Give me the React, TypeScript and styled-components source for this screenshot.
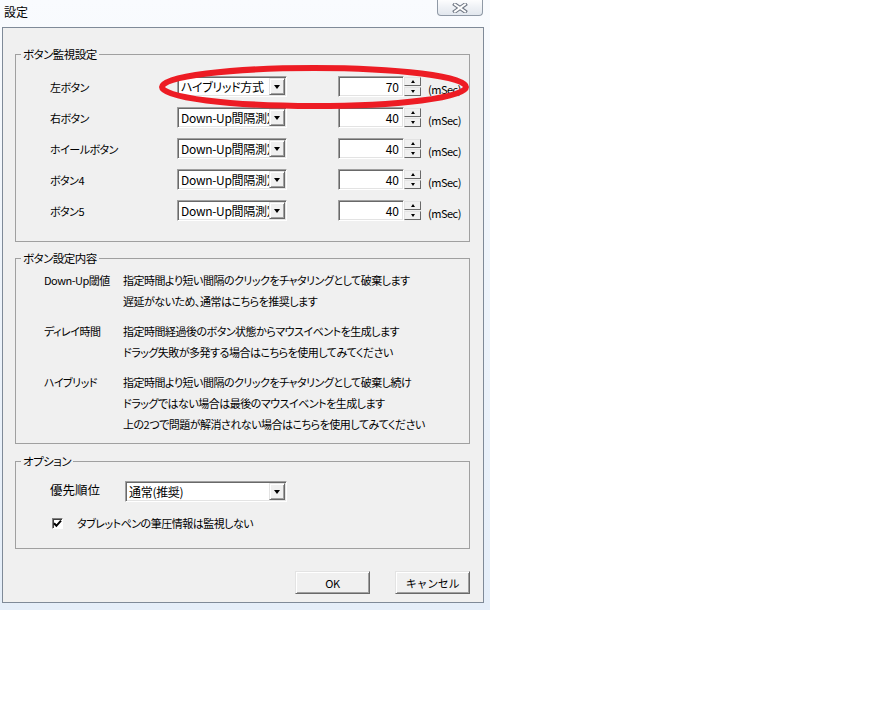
import React from "react";
import styled, { createGlobalStyle } from "styled-components";

const GlobalStyle = createGlobalStyle`
  html, body {
    margin: 0;
    padding: 0;
    background: #fff;
  }
  body {
    font-family: "Noto Sans CJK JP", "Noto Sans", sans-serif;
    font-size: 11px;
    letter-spacing: -0.5px;
    color: #000;
    font-feature-settings: "palt";
  }
  * {
    box-sizing: border-box;
  }
`;

const buttonRows = [
    { label: "左ボタン", mode: "ハイブリッド方式", value: "70" },
    { label: "右ボタン", mode: "Down-Up間隔測定", value: "40" },
    { label: "ホイールボタン", mode: "Down-Up間隔測定", value: "40" },
    { label: "ボタン4", mode: "Down-Up間隔測定", value: "40" },
    { label: "ボタン5", mode: "Down-Up間隔測定", value: "40" },
];

const descriptions = [
    {
        label: "Down-Up閾値",
        lines: [
            "指定時間より短い間隔のクリックをチャタリングとして破棄します",
            "遅延がないため、通常はこちらを推奨します",
        ],
    },
    {
        label: "ディレイ時間",
        lines: [
            "指定時間経過後のボタン状態からマウスイベントを生成します",
            "ドラッグ失敗が多発する場合はこちらを使用してみてください",
        ],
    },
    {
        label: "ハイブリッド",
        lines: [
            "指定時間より短い間隔のクリックをチャタリングとして破棄し続け",
            "ドラッグではない場合は最後のマウスイベントを生成します",
            "上の2つで問題が解消されない場合はこちらを使用してみてください",
        ],
    },
];

const Combo = ({ text, width }: { text: string; width: number }) => (
    <ComboBox $width={width}>
        <ComboText>{text}</ComboText>
        <DropButton>
            <Triangle $size={7} />
        </DropButton>
    </ComboBox>
);

const Spinner = ({ value }: { value: string }) => (
    <SpinWrap>
        <SpinEdit>{value}</SpinEdit>
        <SpinArrows>
            <SpinButton>
                <Triangle $size={5} $up />
            </SpinButton>
            <SpinButton>
                <Triangle $size={5} />
            </SpinButton>
        </SpinArrows>
    </SpinWrap>
);

export default function App() {
    return (
        <>
            <GlobalStyle />
            <Window>
                <TitleBar>
                    <Title>設定</Title>
                    <CloseButton>
                        <svg width="16" height="10" viewBox="0 0 16 10">
                            <path d="M3 1.5 L13 8.5 M13 1.5 L3 8.5" stroke="#6d7582" strokeWidth="4" strokeLinecap="square" />
                            <path d="M3 1.5 L13 8.5 M13 1.5 L3 8.5" stroke="#fdfdfd" strokeWidth="2" strokeLinecap="square" />
                        </svg>
                    </CloseButton>
                </TitleBar>

                <Client>
                    <Group>
                        <Legend>ボタン監視設定</Legend>
                        <MonitorBody>
                            {buttonRows.map((row) => (
                                <MonitorRow key={row.label}>
                                    <RowLabel>{row.label}</RowLabel>
                                    <Combo text={row.mode} width={110} />
                                    <Spinner value={row.value} />
                                    <Unit>(mSec)</Unit>
                                </MonitorRow>
                            ))}
                        </MonitorBody>
                    </Group>

                    <Group $gap={9}>
                        <Legend>ボタン設定内容</Legend>
                        <DescBody>
                            {descriptions.map((item) => (
                                <DescItem key={item.label}>
                                    <span>{item.label}</span>
                                    <DescLines>
                                        {item.lines.map((line) => (
                                            <span key={line}>{line}</span>
                                        ))}
                                    </DescLines>
                                </DescItem>
                            ))}
                        </DescBody>
                    </Group>

                    <Group $gap={10}>
                        <Legend>オプション</Legend>
                        <OptionBody>
                            <PriorityRow>
                                <PriorityLabel>優先順位</PriorityLabel>
                                <Combo text="通常(推奨)" width={162} />
                            </PriorityRow>
                            <CheckRow>
                                <CheckBox>
                                    <svg width="9" height="9" viewBox="0 0 9 9">
                                        <path d="M1 4.2 L3.4 6.8 L8 1.6" fill="none" stroke="#000" strokeWidth="2" />
                                    </svg>
                                </CheckBox>
                                <span>タブレットペンの筆圧情報は監視しない</span>
                            </CheckRow>
                        </OptionBody>
                    </Group>

                    <ButtonRow>
                        <PushButton>OK</PushButton>
                        <PushButton>キャンセル</PushButton>
                    </ButtonRow>
                </Client>

                <Annotation width="490" height="130" viewBox="0 0 490 130">
                    <ellipse cx="314" cy="87" rx="152" ry="19" fill="none" stroke="#ed1c24" strokeWidth="6" />
                </Annotation>
            </Window>
        </>
    );
}

const Window = styled.div`
    position: relative;
    width: 490px;
    height: 610px;
    display: flex;
    flex-direction: column;
    background: linear-gradient(180deg, #f9fbfe 0%, #eef4fb 45%, #e5eef9 100%);
`;

const TitleBar = styled.div`
    height: 27px;
    display: flex;
    justify-content: space-between;
    align-items: flex-start;
`;

const Title = styled.div`
    margin: 5px 0 0 4px;
    font-size: 12px;
    letter-spacing: 0;
    line-height: 14px;
    color: #000;
`;

const CloseButton = styled.div`
    width: 46px;
    height: 16px;
    margin-right: 7px;
    display: flex;
    align-items: center;
    justify-content: center;
    border: 1px solid #8f99a6;
    border-top: none;
    border-radius: 0 0 4px 4px;
    background: linear-gradient(180deg, #fdfdfe 0%, #eef1f5 50%, #e2e7ee 100%);
`;

const Client = styled.div`
    flex: 1;
    margin: 0 6px 7px 2px;
    padding: 19px 13px 0 12px;
    display: flex;
    flex-direction: column;
    background: #f0f0f0;
    border: 1px solid #7f8a98;
`;

const Group = styled.fieldset<{ $gap?: number }>`
    margin: ${(p) => p.$gap ?? 0}px 0 0 0;
    padding: 0;
    min-width: 0;
    border: 1px solid #a0a0a0;
`;

const Legend = styled.legend`
    margin-left: 5px;
    padding: 0 2px;
    font-size: 11.5px;
    line-height: 14px;
`;

const MonitorBody = styled.div`
    display: flex;
    flex-direction: column;
    gap: 10px;
    padding: 15px 0 20px 34px;
`;

const MonitorRow = styled.div`
    display: flex;
    align-items: center;
    height: 21px;
`;

const RowLabel = styled.span`
    width: 127px;
    line-height: 14px;
`;

const ComboBox = styled.div<{ $width: number }>`
    width: ${(p) => p.$width}px;
    height: 21px;
    display: flex;
    align-items: center;
    background: #fff;
    border: 1px solid;
    border-color: #a0a0a0 #fff #fff #a0a0a0;
    box-shadow: inset 1px 1px #696969, inset -1px -1px #e3e3e3;
    padding: 1px;
`;

const ComboText = styled.span`
    flex: 1;
    overflow: hidden;
    white-space: nowrap;
    padding-left: 2px;
    font-size: 12px;
    letter-spacing: -0.3px;
    line-height: 17px;
`;

const DropButton = styled.div`
    width: 16px;
    height: 17px;
    flex-shrink: 0;
    display: flex;
    align-items: center;
    justify-content: center;
    background: #f0f0f0;
    border: 1px solid;
    border-color: #e3e3e3 #696969 #696969 #e3e3e3;
    box-shadow: inset 1px 1px #fff, inset -1px -1px #a0a0a0;
`;

const Triangle = styled.span<{ $size: number; $up?: boolean }>`
    width: 0;
    height: 0;
    border-left: ${(p) => p.$size / 2}px solid transparent;
    border-right: ${(p) => p.$size / 2}px solid transparent;
    ${(p) =>
        p.$up
            ? `border-bottom: ${Math.ceil(p.$size / 2)}px solid #000;`
            : `border-top: ${Math.ceil(p.$size / 2)}px solid #000;`}
`;

const SpinWrap = styled.div`
    margin-left: 51px;
    display: flex;
    height: 21px;
`;

const SpinEdit = styled.div`
    width: 66px;
    height: 21px;
    padding: 2px 4px 0 0;
    text-align: right;
    font-size: 12px;
    letter-spacing: 0;
    line-height: 16px;
    background: #fff;
    border: 1px solid;
    border-color: #a0a0a0 #fff #fff #a0a0a0;
    box-shadow: inset 1px 1px #696969, inset -1px -1px #e3e3e3;
`;

const SpinArrows = styled.div`
    width: 17px;
    display: flex;
    flex-direction: column;
    justify-content: center;
    gap: 1px;
`;

const SpinButton = styled.div`
    height: 9px;
    display: flex;
    align-items: center;
    justify-content: center;
    background: #f0f0f0;
    border: 1px solid;
    border-color: #e3e3e3 #696969 #696969 #e3e3e3;
`;

const Unit = styled.span`
    margin: 4px 0 0 7px;
    line-height: 14px;
`;

const DescBody = styled.div`
    display: flex;
    flex-direction: column;
    gap: 9px;
    padding: 5px 0 8px 28px;
`;

const DescItem = styled.div`
    display: grid;
    grid-template-columns: 79px auto;
    line-height: 21px;
`;

const DescLines = styled.div`
    display: flex;
    flex-direction: column;
    white-space: nowrap;
`;

const OptionBody = styled.div`
    display: flex;
    flex-direction: column;
    gap: 13px;
    padding: 13px 0 17px 34px;
`;

const PriorityRow = styled.div`
    display: flex;
    align-items: center;
`;

const PriorityLabel = styled.span`
    width: 75px;
    font-size: 12.5px;
    letter-spacing: 0;
    line-height: 16px;
    margin-top: -3px;
`;

const CheckRow = styled.div`
    display: flex;
    align-items: center;
    gap: 14px;
    margin-left: 2px;
    height: 16px;
`;

const CheckBox = styled.span`
    width: 11px;
    height: 11px;
    display: flex;
    align-items: center;
    justify-content: center;
    background: #fff;
    border: 1px solid;
    border-color: #808080 #fff #fff #808080;
    box-shadow: inset 1px 1px #404040;
`;

const ButtonRow = styled.div`
    margin-top: 22px;
    display: flex;
    justify-content: flex-end;
    gap: 25px;
`;

const PushButton = styled.button`
    width: 75px;
    height: 23px;
    padding: 0;
    font-family: inherit;
    font-size: 11px;
    letter-spacing: -0.3px;
    color: #000;
    background: #f0f0f0;
    border: 1px solid;
    border-color: #e3e3e3 #696969 #696969 #e3e3e3;
    box-shadow: inset 1px 1px #fff, inset -1px -1px #a0a0a0;
`;

const Annotation = styled.svg`
    position: absolute;
    left: 0;
    top: 0;
    pointer-events: none;
`;
